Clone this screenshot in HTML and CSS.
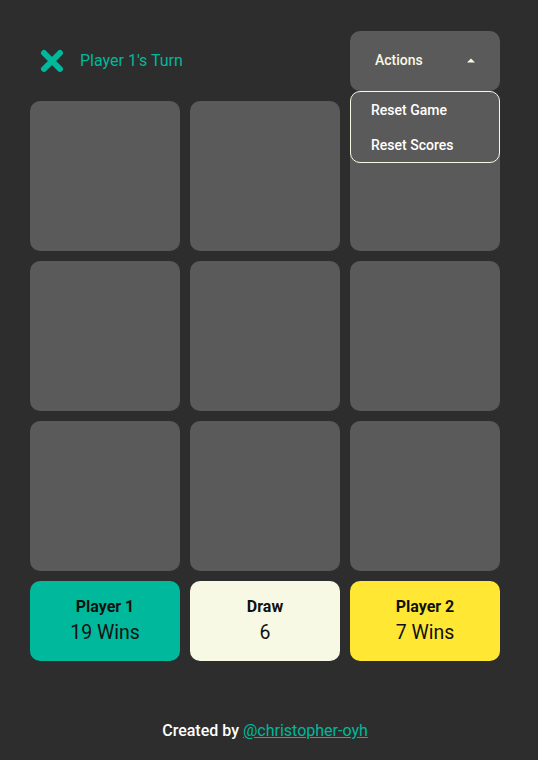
FILE: index.html
```html
<!DOCTYPE html>
<html>
<head>
<meta charset="utf-8">
<link rel="stylesheet" href="styles.css">
</head>
<body>
<div class="app">
  <header class="top">
    <div class="turn">
      <svg class="turn-icon" width="24" height="24" viewBox="0 0 24 24">
        <path d="M4 4 L20 20 M20 4 L4 20" stroke="#00b89c" stroke-width="6" stroke-linecap="round"/>
      </svg>
      <span class="turn-text">Player 1's Turn</span>
    </div>
    <div class="actions">
      <button class="actions-btn">
        <span>Actions</span>
        <svg width="10" height="6" viewBox="0 0 10 6"><path d="M1 5.5 L5 1.5 L9 5.5 Z" fill="#f8f8e4"/></svg>
      </button>
      <ul class="menu">
        <li>Reset Game</li>
        <li>Reset Scores</li>
      </ul>
    </div>
  </header>
  <main class="board">
    <div class="cell"></div><div class="cell"></div><div class="cell"></div>
    <div class="cell"></div><div class="cell"></div><div class="cell"></div>
    <div class="cell"></div><div class="cell"></div><div class="cell"></div>
  </main>
  <section class="scores">
    <div class="score p1"><b>Player 1</b><span>19 Wins</span></div>
    <div class="score draw"><b>Draw</b><span>6</span></div>
    <div class="score p2"><b>Player 2</b><span>7 Wins</span></div>
  </section>
  <footer class="foot">Created by <a href="#">@christopher-oyh</a></footer>
</div>
</body>
</html>
```
FILE: styles.css
```css
* { box-sizing: border-box; }
html, body { margin: 0; background: #2d2d2d; }
body { font-family: Roboto, "Noto Sans", sans-serif; }
.app { width: 470px; margin-left: 30px; padding-top: 31px; }
.top { display: flex; justify-content: space-between; align-items: center; height: 60px; }
.turn { display: flex; align-items: center; gap: 16px; padding-left: 10px; margin-top: -1px; }
.turn-icon { display: block; }
.turn-text { color: #00b89c; font-size: 16px; }
.actions { position: relative; width: 150px; height: 60px; }
.actions-btn {
  width: 150px; height: 60px; background: #5a5a5a; border: none; border-radius: 10px;
  display: flex; align-items: center; justify-content: space-between; padding: 0 24px 2px 25px;
  color: #f8f8e4; font-family: Roboto, sans-serif; font-size: 14px; font-weight: 500;
}
.menu {
  position: absolute; top: 60px; left: 0; width: 150px; margin: 0; padding: 8px 0 0;
  list-style: none; background: #5a5a5a; border: 1px solid #f8f8e4; border-radius: 10px;
  height: 72px; z-index: 2;
}
.menu li { color: #fff; font-size: 14px; font-weight: 500; padding-left: 20px; height: 35px; line-height: 20px; }
.board { display: grid; grid-template-columns: repeat(3, 150px); gap: 10px; margin-top: 10px; }
.cell { height: 150px; background: #5a5a5a; border-radius: 10px; }
.scores { display: grid; grid-template-columns: repeat(3, 150px); gap: 10px; margin-top: 10px; }
.score { height: 80px; border-radius: 10px; display: flex; flex-direction: column; align-items: center; justify-content: center; padding-top: 2px; color: #111; }
.score b { font-size: 16px; font-weight: 700; line-height: 20px; }
.score span { font-size: 19.5px; line-height: 28px; margin-top: 2px; }
.p1 { background: #00b89c; }
.draw { background: #f8f9e4; }
.p2 { background: #ffe733; }
.foot { text-align: center; color: #fff; font-size: 16px; font-weight: 500; margin-top: 60px; line-height: 20px; }
.foot a { color: #00b89c; font-weight: 400; }
```
